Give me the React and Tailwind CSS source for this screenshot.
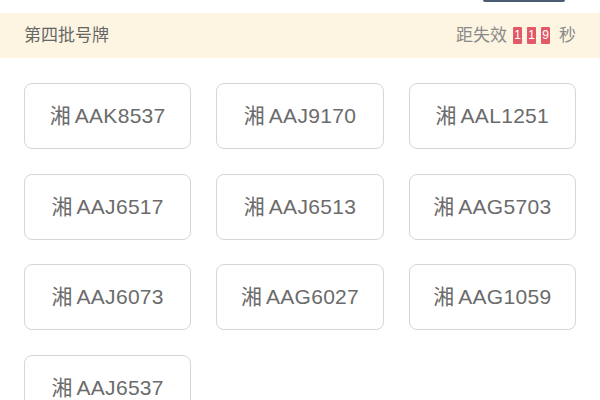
const plates = [
  'AAK8537', 'AAJ9170', 'AAL1251',
  'AAJ6517', 'AAJ6513', 'AAG5703',
  'AAJ6073', 'AAG6027', 'AAG1059',
  'AAJ6537',
]

const font = { fontFamily: '"Liberation Sans", "Noto Sans CJK SC", sans-serif' }

export default function App() {
  return (
    <div className="w-[600px] h-[400px] overflow-hidden bg-white" style={font}>
      {/* top button edge */}
      <div className="h-[13px] flex justify-end pr-[35px]">
        <div className="w-[82px] h-[2px] rounded-b-md bg-[#4a5b72]" />
      </div>

      {/* banner */}
      <div className="h-[45px] bg-[#fdf5e1] flex items-center justify-between px-6">
        <span className="text-[17px] text-[#666]">第四批号牌</span>
        <div className="flex items-center text-[17px] text-[#8a8a8a]">
          <span className="mr-[6px]">距失效</span>
          {['1', '1', '9'].map((d, i) => (
            <span
              key={i}
              className="w-[9px] h-[17px] bg-[#e25a68] text-white text-[12px] leading-[17px] text-center mr-[5px] rounded-[1px]"
            >
              {d}
            </span>
          ))}
          <span className="ml-[4px]">秒</span>
        </div>
      </div>

      <div className="grid grid-cols-3 gap-x-[25px] gap-y-[24.5px] px-6 pt-[25px]">
        {plates.map((p) => (
          <div
            key={p}
            className="h-[66px] border border-[#d6d6d6] rounded-[8px] flex items-center justify-center text-[21px] text-[#6b6b6b]"
          >
            <span>湘</span>
            <span className="ml-[4px] tracking-[0.3px]">{p}</span>
          </div>
        ))}
      </div>
    </div>
  )
}
